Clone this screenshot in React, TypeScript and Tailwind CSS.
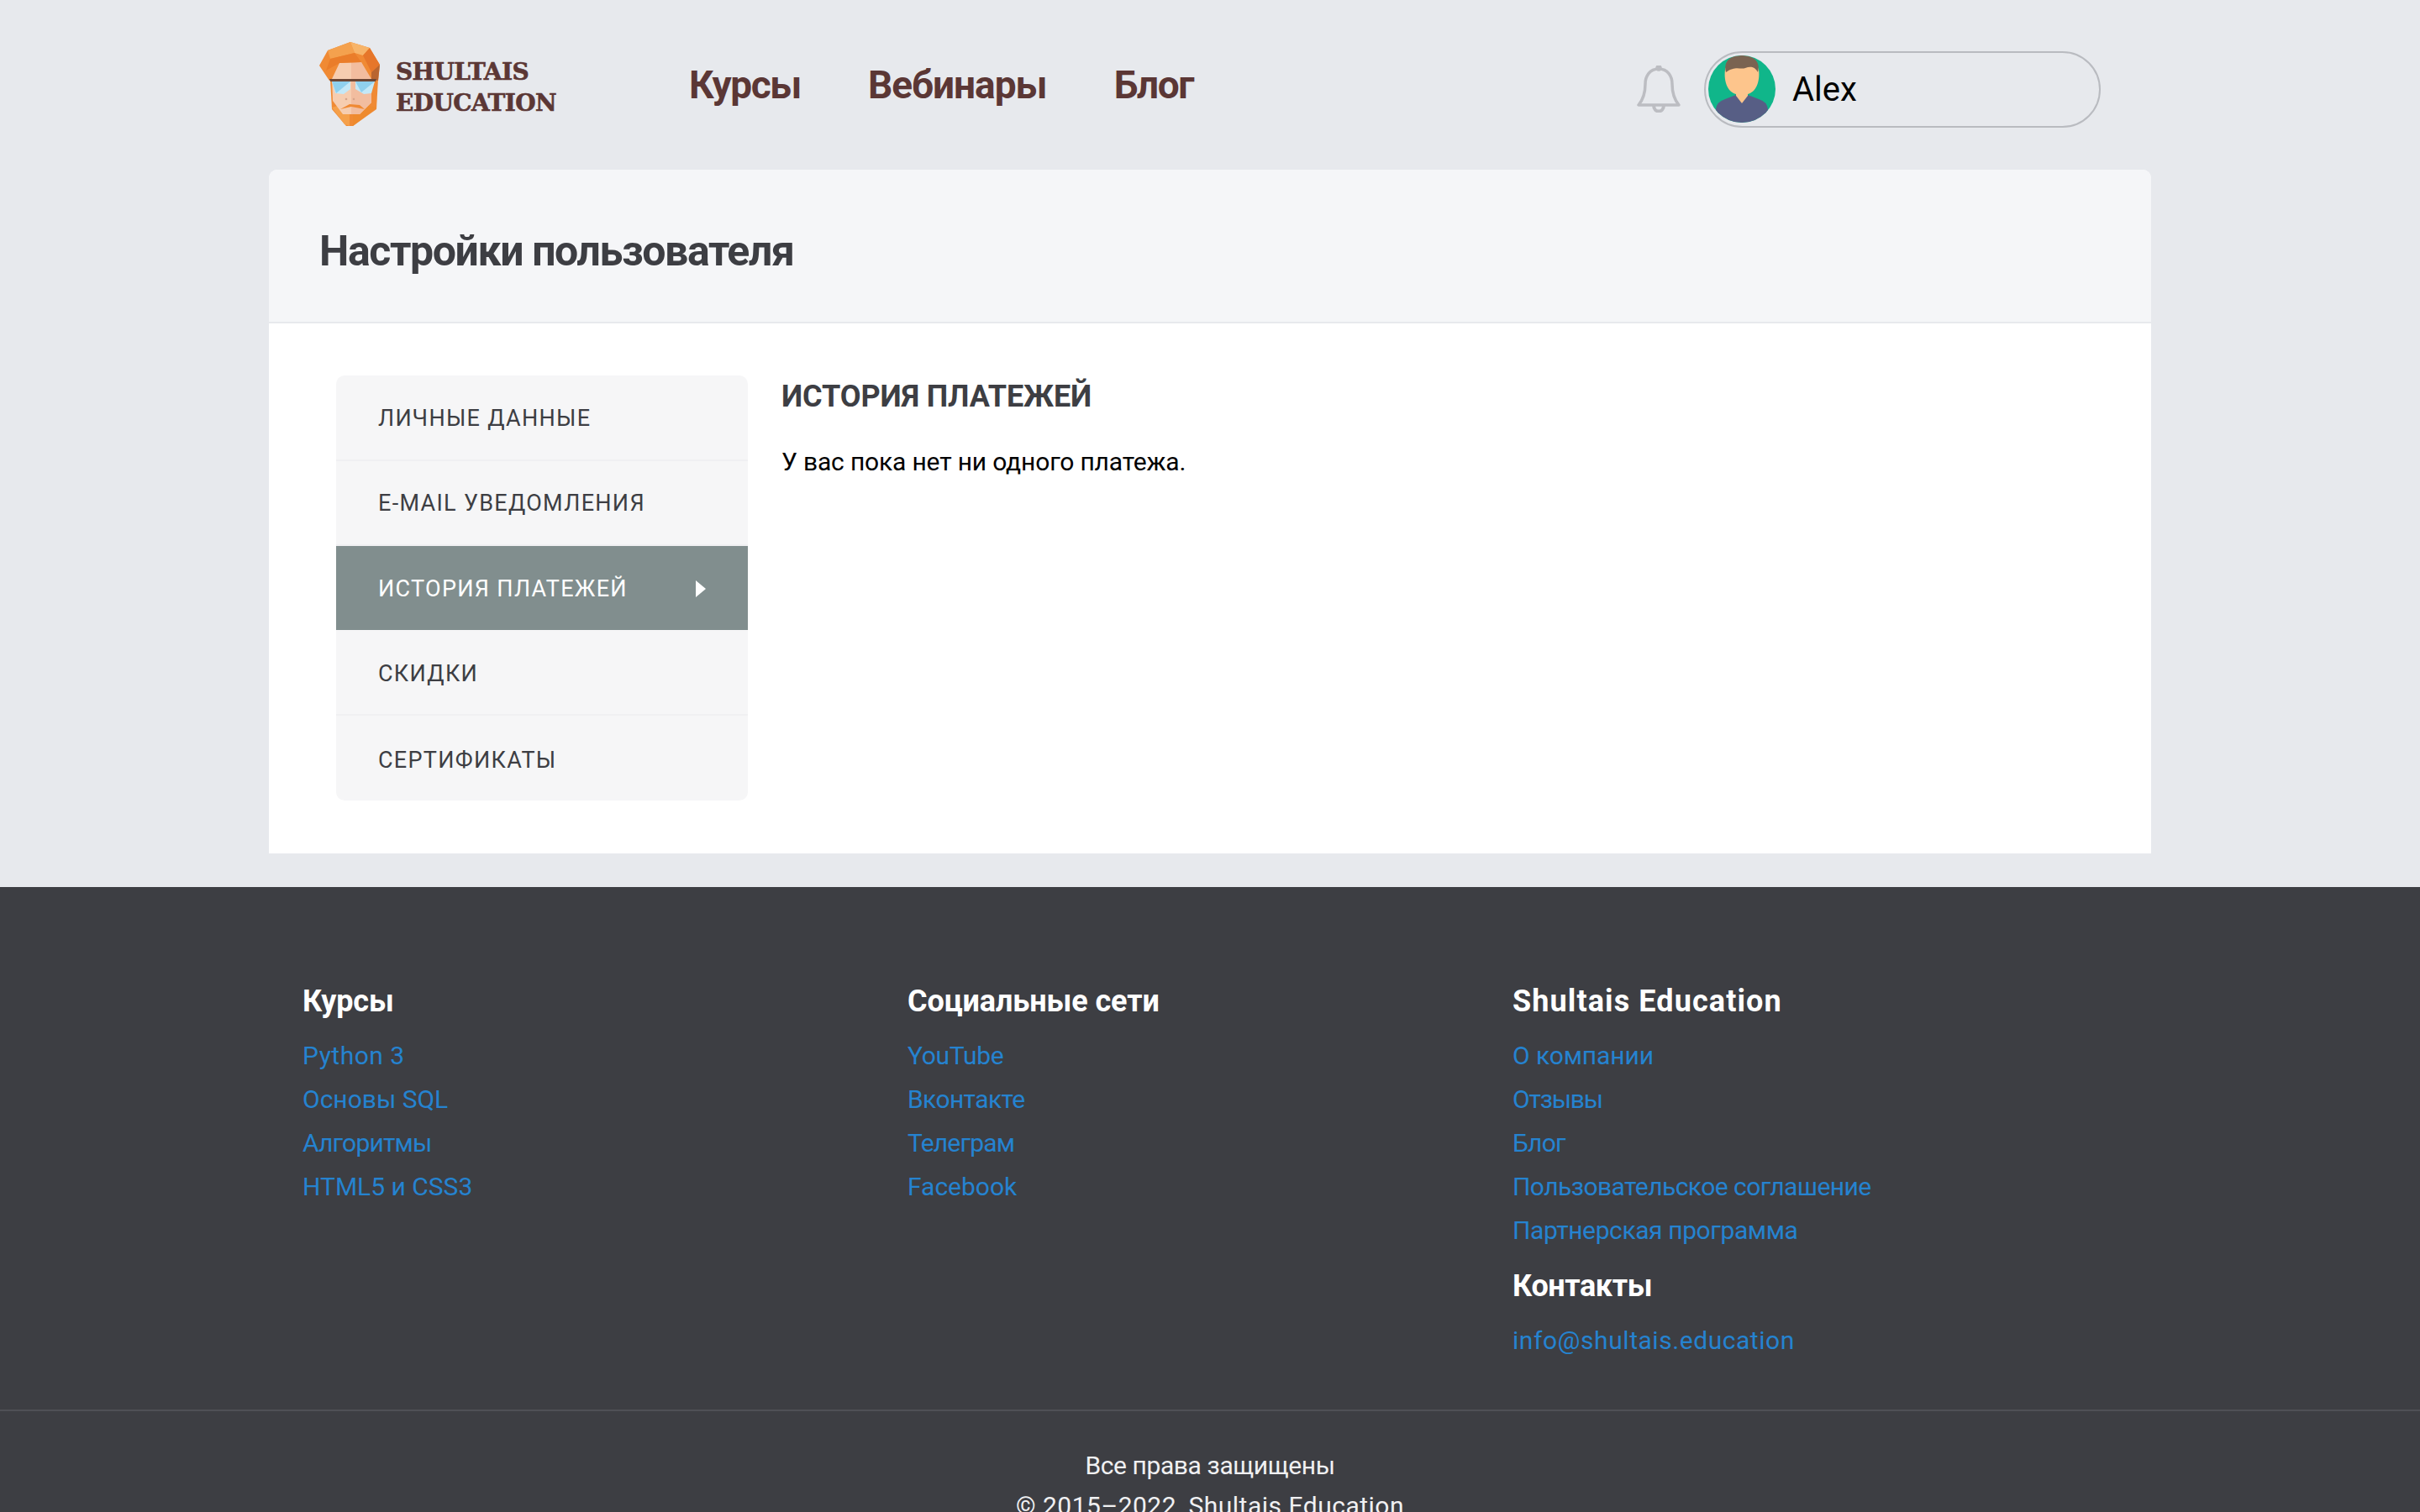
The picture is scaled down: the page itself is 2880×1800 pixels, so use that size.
const sans = "font-['Roboto','Noto_Sans',sans-serif]";

const sideItems = ["ЛИЧНЫЕ ДАННЫЕ", "E-MAIL УВЕДОМЛЕНИЯ", "ИСТОРИЯ ПЛАТЕЖЕЙ", "СКИДКИ", "СЕРТИФИКАТЫ"];

const courses = [
  { t: "Python 3", c: "tracking-[0.5px]" },
  { t: "Основы SQL", c: "tracking-[0px]" },
  { t: "Алгоритмы", c: "tracking-[-0.8px]" },
  { t: "HTML5 и CSS3", c: "tracking-[0px]" },
];
const socials = [
  { t: "YouTube", c: "tracking-[-0.3px]" },
  { t: "Вконтакте", c: "tracking-[-0.6px]" },
  { t: "Телеграм", c: "tracking-[-0.8px]" },
  { t: "Facebook", c: "tracking-[0px]" },
];
const company = [
  { t: "О компании", c: "tracking-[-0.1px]" },
  { t: "Отзывы", c: "tracking-[-1.2px]" },
  { t: "Блог", c: "tracking-[-0.8px]" },
  { t: "Пользовательское соглашение", c: "tracking-[-0.55px]" },
  { t: "Партнерская программа", c: "tracking-[-0.4px]" },
];

function LogoFace() {
  return (
    <svg width="73" height="100" viewBox="0 0 73 100" className="shrink-0">
      {/* beard */}
      <polygon points="13,44 70,44 68,80 40,100 32,100 15,80" fill="#f08a34" />
      <polygon points="15,78 36,72 36,100 30,98" fill="#f5a04a" />
      <polygon points="68,78 40,72 40,100" fill="#ee8a2e" />
      {/* skin */}
      <polygon points="15,42 24,25 50,24 62,42 62,72 48,86 28,86 16,70" fill="#f6cdb0" />
      <polygon points="38,24 50,24 62,42 62,72 48,86 38,86" fill="#f2bd9f" />
      {/* hair */}
      <polygon points="0,28 10,10 37,0 60,7 72,27 70,46 62,44 50,24 24,25 15,44 12,46" fill="#f08a34" />
      <polygon points="10,10 37,0 42,13 13,20" fill="#f4a14e" />
      <polygon points="37,0 60,7 52,16 42,13" fill="#f7b469" />
      <polygon points="13,20 42,13 50,24 24,25 8,34" fill="#ea7d2a" />
      <polygon points="52,16 60,7 72,27 62,36" fill="#e6762a" />
      <polygon points="62,36 72,27 70,46 62,44" fill="#b9652f" />
      {/* glasses */}
      <polygon points="12,44 68,44 67,47 13,47" fill="#6b4635" />
      <polygon points="15,47 37,47 37,56 29,62 19,61" fill="#c4e8f7" />
      <polygon points="43,47 66,47 62,61 53,62 43,56" fill="#c4e8f7" />
      <polygon points="15,47 37,47 20,61" fill="#8fd0ee" />
      <polygon points="43,47 66,47 50,60" fill="#8fd0ee" />
      {/* nose and moustache */}
      <circle cx="32" cy="68" r="1.3" fill="#d7a58a" />
      <circle cx="41" cy="68" r="1.3" fill="#d7a58a" />
      <polygon points="25,80 36,74 48,75 54,80 38,77" fill="#f08a34" />
    </svg>
  );
}

function Avatar() {
  return (
    <svg width="80" height="80" viewBox="0 0 80 80" className="shrink-0">
      <defs>
        <clipPath id="avatarClip">
          <circle cx="40" cy="40" r="40" />
        </clipPath>
      </defs>
      <g clipPath="url(#avatarClip)">
        <rect width="80" height="80" fill="#10b68a" />
        <path d="M9 80 V64 Q10 55 20 52 L33 47 H47 L60 52 Q70 55 71 64 V80 Z" fill="#575e85" />
        <path d="M33 44 H47 V48 L40 57 L33 48 Z" fill="#fdc58c" />
        <path d="M20 17 C20 6 60 6 60 17 C62 32 56 44 47 46 H33 C24 44 18 32 20 17 Z" fill="#fdc58c" />
        <path d="M21 20 C17 2 33 0 40 0 C52 0 63 6 59 20 C55 13 50 13 44 15 C38 17 32 12 21 20 Z" fill="#7a6351" />
      </g>
    </svg>
  );
}

function Bell() {
  return (
    <svg width="52" height="56" viewBox="0 0 52 56" fill="none" stroke="#bcbdc2" strokeWidth="3.5" strokeLinejoin="round" className="shrink-0">
      <path d="M26 4 C15 4 10 13 10 22 C10 34 7 41 2 47 H50 C45 41 42 34 42 22 C42 13 37 4 26 4 Z" />
      <circle cx="26" cy="3" r="2" fill="#bcbdc2" />
      <path d="M20 47 C20 57 32 57 32 47" strokeWidth="4" />
    </svg>
  );
}

function FooterCol({ title, tracking, links }: { title: string; tracking: string; links: { t: string; c: string }[] }) {
  return (
    <>
      <h4 className={`text-[36px] leading-[46px] font-bold text-white ${tracking}`}>{title}</h4>
      <ul className="mt-[16px]">
        {links.map((l) => (
          <li key={l.t} className={`text-[30px] leading-[52px] text-[#2583d0] ${l.c}`}>{l.t}</li>
        ))}
      </ul>
    </>
  );
}

export default function App() {
  return (
    <div className={`h-screen overflow-hidden bg-[#e7e9ed] ${sans}`}>
      {/* Header */}
      <header className="mx-auto w-[2240px] h-[202px] flex items-center pl-[60px] pr-[60px]">
        <div className="flex items-center gap-[18px] w-[440px] -mt-[2px]">
          <LogoFace />
          <div className="font-['DejaVu_Serif',serif] font-bold text-[#5b3735] text-[28px] leading-[37px] tracking-[-0.6px] mt-[8px] [-webkit-text-stroke:0.6px_#5b3735]">
            <div>SHULTAIS</div>
            <div>EDUCATION</div>
          </div>
        </div>
        <nav className="flex items-center gap-[80px] text-[46px] font-bold text-[#5b3735] tracking-[-1.4px]">
          <span>Курсы</span>
          <span className="tracking-[-1px]">Вебинары</span>
          <span>Блог</span>
        </nav>
        <div className="ml-auto flex items-center gap-[28px] mt-[10px]">
          <Bell />
          <div className="w-[472px] h-[91px] rounded-[46px] border-2 border-[#b9bbc0] flex items-center pl-[3px] gap-[20px]">
            <Avatar />
            <span className="text-[40px] text-black pt-[2px]">Alex</span>
          </div>
        </div>
      </header>

      {/* Settings card */}
      <main className="mx-auto w-[2240px] h-[814px] bg-white rounded-t-[10px] overflow-hidden">
        <div className="h-[183px] bg-[#f5f6f8] border-b-2 border-[#e7e9ed] flex items-center pl-[60px] pt-[14px]">
          <h1 className="text-[50px] font-bold text-[#3d3e43] tracking-[-1.4px]">Настройки пользователя</h1>
        </div>
        <div className="flex pt-[62px] pl-[80px]">
          <aside className="w-[490px] rounded-[10px] overflow-hidden bg-[#f6f6f7]">
            {sideItems.map((item, i) => (
              <div
                key={item}
                className={
                  i === 2
                    ? "h-[100px] flex items-center justify-between pl-[50px] pr-[50px] pt-[2px] bg-[#818e8e] text-white text-[27px] tracking-[1.3px]"
                    : i > 2
                      ? "h-[101.5px] flex items-center pl-[50px] pt-[5px] border-b-2 border-[#f0f0f2] last:border-b-0 text-[#3d3e43] text-[27px] tracking-[1.3px]"
                      : "h-[101.5px] flex items-center pl-[50px] pt-[2px] border-b-2 border-[#f0f0f2] text-[#3d3e43] text-[27px] tracking-[1.3px]"
                }
              >
                <span>{item}</span>
                {i === 2 && <span className="w-0 h-0 border-y-[10px] border-y-transparent border-l-[12px] border-l-white" />}
              </div>
            ))}
          </aside>
          <section className="ml-[40px] pt-[2px]">
            <h2 className="text-[36px] leading-[46px] font-bold text-[#3d3e43] tracking-[-0.1px]">ИСТОРИЯ ПЛАТЕЖЕЙ</h2>
            <p className="mt-[32px] text-[30px] text-black tracking-[-0.17px]">У вас пока нет ни одного платежа.</p>
          </section>
        </div>
      </main>

      {/* Footer */}
      <footer className="mt-[40px] bg-[#3d3e43] min-h-[744px]">
        <div className="mx-auto w-[2160px] grid grid-cols-3 pt-[113px] pb-[56px]">
          <div><FooterCol title="Курсы" tracking="tracking-[-0.2px]" links={courses} /></div>
          <div><FooterCol title="Социальные сети" tracking="tracking-[-0.1px]" links={socials} /></div>
          <div>
            <FooterCol title="Shultais Education" tracking="tracking-[1.1px]" links={company} />
            <h4 className="mt-[17px] text-[36px] leading-[46px] font-bold text-white tracking-[-0.4px]">Контакты</h4>
            <div className="mt-[16px] text-[30px] leading-[52px] text-[#2583d0] tracking-[0.55px]">info@shultais.education</div>
          </div>
        </div>
        <div className="border-t-2 border-[#4f5056] pt-[41px] text-center text-[30px] leading-[48px] text-[#f0f0f2]">
          <p className="tracking-[-0.4px]">Все права защищены</p>
          <p className="tracking-[0.5px]">© 2015–2022, Shultais Education</p>
        </div>
      </footer>
    </div>
  );
}
